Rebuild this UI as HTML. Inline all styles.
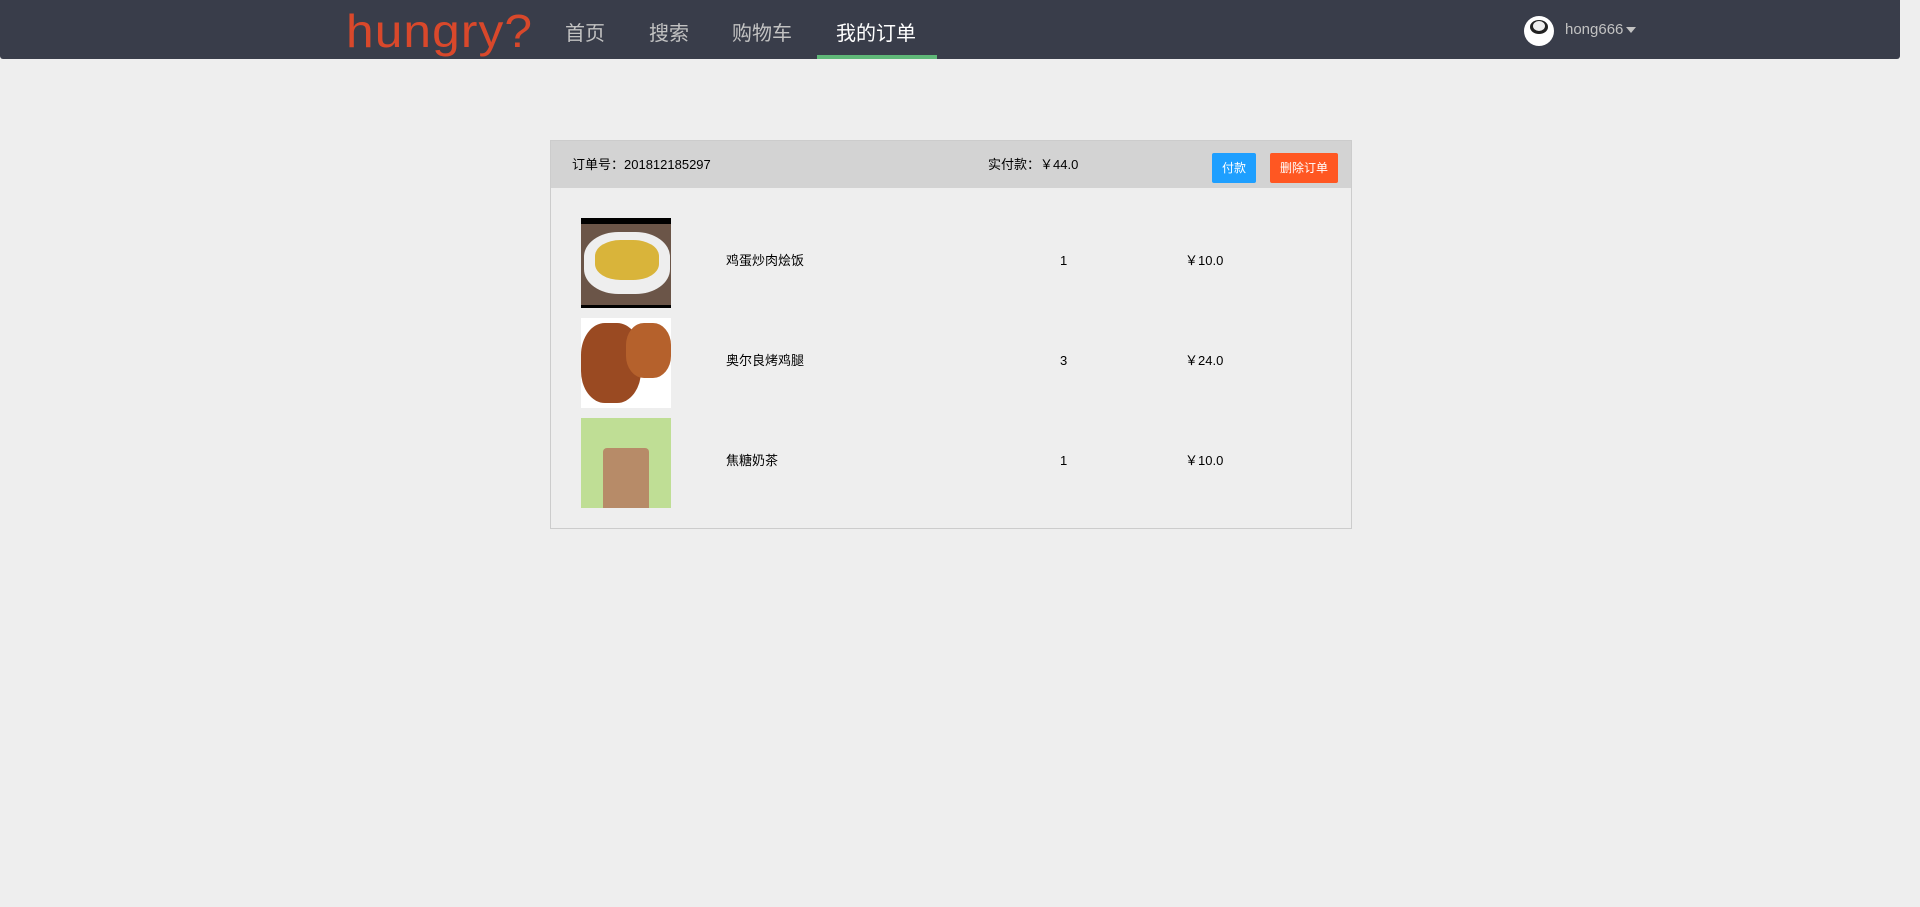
<!DOCTYPE html>
<html><head><meta charset="utf-8"><style>
*{margin:0;padding:0;box-sizing:border-box}
body{width:1920px;height:907px;background:#eeeeee;font-family:"Liberation Sans","Noto Sans CJK SC",sans-serif;position:relative;overflow:hidden}
.nav{position:absolute;left:0;top:0;width:1900px;height:59px;background:#393d4a;border-radius:0 0 3px 3px}
.logo{position:absolute;left:346px;top:4px;font-family:"Liberation Sans",sans-serif;color:#d9482b;font-size:46px;letter-spacing:1px;transform:scaleX(1.08);transform-origin:left}
.ni{position:absolute;top:17px;font-size:20px;color:#c2c2c2}
.act{color:#fff}
.ul{position:absolute;left:817px;top:55px;width:120px;height:4px;background:#5fb878}
.av{position:absolute;left:1524px;top:16px;width:30px;height:30px;border-radius:50%;background:#fff;overflow:hidden}
.user{position:absolute;left:1565px;top:21px;font-size:15px;color:#c2c2c2}
.caret{position:absolute;left:1626px;top:27px;width:0;height:0;border-left:5px solid transparent;border-right:5px solid transparent;border-top:6px solid #c2c2c2}
.card{position:absolute;left:550px;top:140px;width:802px;height:389px;border:1px solid #ccc;background:#eee}
.hd{position:absolute;left:0;top:0;width:800px;height:47px;background:#d3d3d3}
.t{position:absolute;font-size:13px;line-height:15px;color:#000}
.btn{position:absolute;top:12px;height:30px;color:#fff;font-size:12px;line-height:30px;text-align:center;border-radius:2px}
.img{position:absolute;left:30px;width:90px;height:90px;overflow:hidden}
</style></head><body>
<div class="nav">
<div class="logo">hungry?</div>
<div class="ni" style="left:565px">首页</div>
<div class="ni" style="left:649px">搜索</div>
<div class="ni" style="left:732px">购物车</div>
<div class="ni act" style="left:836px">我的订单</div>
<div class="ul"></div>
<div class="av"><div style="position:absolute;left:6px;top:4px;width:18px;height:14px;background:#222;border-radius:50%"></div><div style="position:absolute;left:9px;top:5px;width:12px;height:10px;background:#eee;border-radius:50%"></div></div>
<div class="user">hong666</div>
<div class="caret"></div>
</div>
<div class="card">
<div class="hd">
<div class="t" style="left:21px;top:16px">订单号：201812185297</div>
<div class="t" style="left:437px;top:16px">实付款：￥44.0</div>
<div class="btn" style="left:661px;width:44px;background:#1e9fff">付款</div>
<div class="btn" style="left:719px;width:68px;background:#ff5722">删除订单</div>
</div>
<div class="img" style="top:77px;background:#6b5548"><div style="height:6px;background:#000"></div><div style="position:absolute;left:3px;top:14px;width:86px;height:62px;background:#eee;border-radius:40%"></div><div style="position:absolute;left:14px;top:22px;width:64px;height:40px;background:#d9b43a;border-radius:40%"></div><div style="position:absolute;bottom:0;width:90px;height:3px;background:#000"></div></div>
<div class="t" style="left:175px;top:112px">鸡蛋炒肉烩饭</div>
<div class="t" style="left:509px;top:112px">1</div>
<div class="t" style="left:634px;top:112px">￥10.0</div>
<div class="img" style="top:177px;background:#fff"><div style="position:absolute;left:0;top:5px;width:60px;height:80px;background:#9a4a22;border-radius:40%"></div><div style="position:absolute;left:45px;top:5px;width:45px;height:55px;background:#b5612c;border-radius:40%"></div></div>
<div class="t" style="left:175px;top:212px">奥尔良烤鸡腿</div>
<div class="t" style="left:509px;top:212px">3</div>
<div class="t" style="left:634px;top:212px">￥24.0</div>
<div class="img" style="top:277px;background:#bfde95"><div style="position:absolute;left:22px;top:30px;width:46px;height:60px;background:#b78b68;border-radius:4px 4px 0 0"></div></div>
<div class="t" style="left:175px;top:312px">焦糖奶茶</div>
<div class="t" style="left:509px;top:312px">1</div>
<div class="t" style="left:634px;top:312px">￥10.0</div>
</div>
</body></html>
